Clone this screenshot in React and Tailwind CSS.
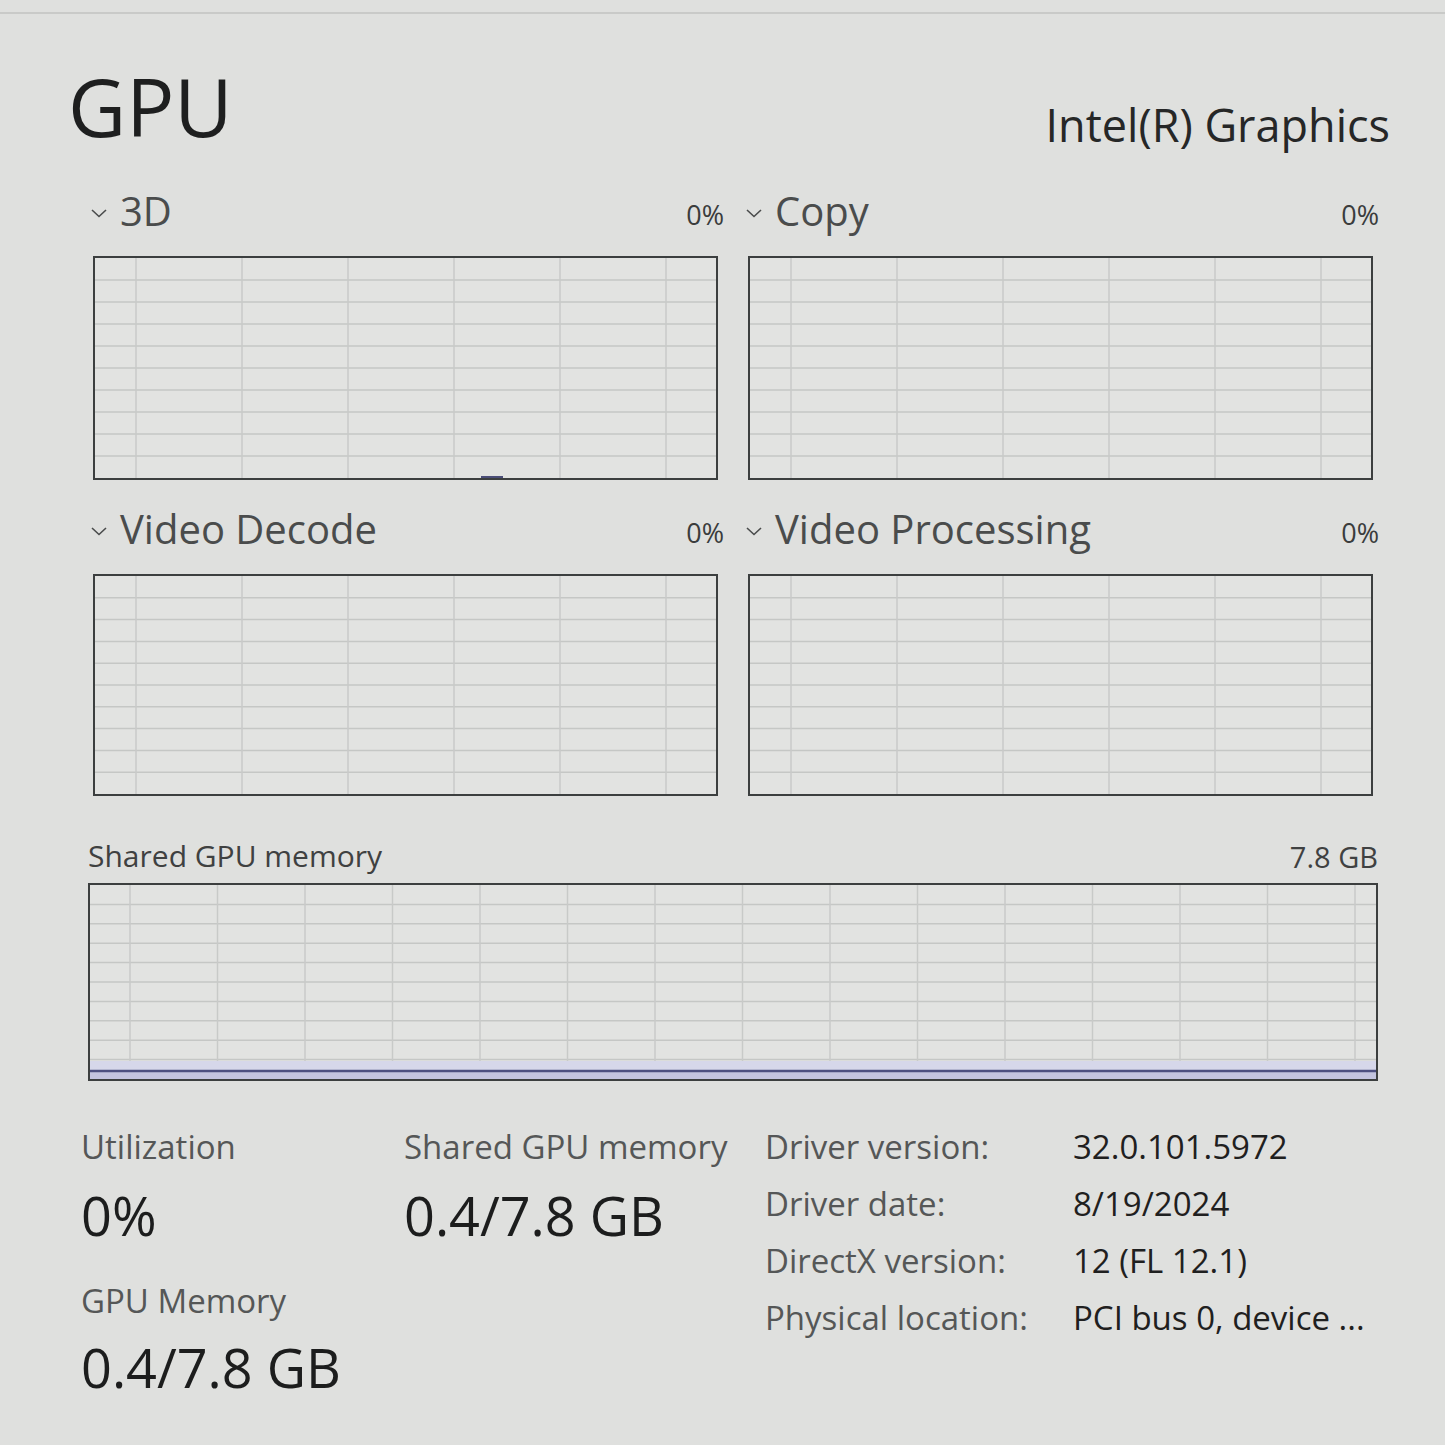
import React from "react";

const engines = [
  [
    { name: "3D", value: "0%", blip: true },
    { name: "Copy", value: "0%" },
  ],
  [
    { name: "Video Decode", value: "0%" },
    { name: "Video Processing", value: "0%" },
  ],
];

const details = [
  ["Driver version:", "32.0.101.5972"],
  ["Driver date:", "8/19/2024"],
  ["DirectX version:", "12 (FL 12.1)"],
  ["Physical location:", "PCI bus 0, device ..."],
];

function Chevron() {
  return (
    <svg width="18" height="10" viewBox="0 0 18 10" className="mt-[2px] mr-[12px] shrink-0">
      <path d="M2 2 L9 8.5 L16 2" fill="none" stroke="#4a4c4c" strokeWidth="1.6" />
    </svg>
  );
}

// grid lines drawn like the task manager graph, 10 rows, scrolling columns
function GridChart({ width, height, offset, spacing, children }) {
  const rows = [];
  for (let i = 1; i < 10; i++) rows.push((height * i) / 10);
  const cols = [];
  for (let x = offset; x < width; x += spacing) cols.push(x);

  return (
    <svg width={width} height={height} className="block">
      {rows.map((y) => (
        <line key={"r" + y} x1="0" x2={width} y1={y} y2={y} stroke="#c5c7c5" strokeWidth="1.5" />
      ))}
      {cols.map((x) => (
        <line key={"c" + x} x1={x} x2={x} y1="0" y2={height} stroke="#c8cac8" strokeWidth="1.5" />
      ))}
      {children}
    </svg>
  );
}

function EngineGraph({ name, value, blip, height }) {
  return (
    <div className="flex flex-col">
      <div className="-ml-[3px] -mr-[6px] mb-[25px] flex h-[38px] items-start justify-between">
        <div className="flex items-center text-[40px] leading-none text-[#4a4c4c]">
          <Chevron />
          <span className="-mt-[2px]">{name}</span>
        </div>
        <span className="mt-[8px] text-[27px] leading-none text-[#3a3c3c]">{value}</span>
      </div>
      <div className="w-[625px] border-2 border-[#3c3f3f] bg-[#e2e3e1]">
        <GridChart width={621} height={height - 4} offset={41} spacing={106}>
          {blip ? (
            <line x1="386" x2="408" y1={height - 5} y2={height - 5} stroke="#4b4e78" strokeWidth="2" />
          ) : null}
        </GridChart>
      </div>
    </div>
  );
}

export default function App() {
  return (
    <div className="h-[1445px] w-[1445px] overflow-hidden bg-[#dfe0de] font-['Open_Sans',sans-serif]">
      <div className="mt-[12px] border-t-2 border-[#c9cac8]" />

      <div className="flex items-start justify-between pl-[68px] pr-[55px] pt-[52px]">
        <h1 className="text-[80px] font-normal leading-none text-[#1e1f1f]">GPU</h1>
        <div className="mt-[36px] text-[45px] leading-none text-[#262727]">Intel(R) Graphics</div>
      </div>

      <div className="mt-[46px] flex flex-col gap-[31px] pl-[93px]">
        {engines.map((row, i) => (
          <div key={i} className="flex gap-[30px]">
            {row.map((e) => (
              <EngineGraph key={e.name} {...e} height={i === 0 ? 224 : 222} />
            ))}
          </div>
        ))}
      </div>

      <div className="mt-[46px] w-[1290px] ml-[88px]">
        <div className="mb-[13px] flex h-[28px] items-start justify-between text-[30px] leading-none text-[#3f4141]">
          <span className="-mt-[1px]">Shared GPU memory</span>
          <span className="text-[29px]">7.8 GB</span>
        </div>
        <div className="border-2 border-[#3c3f3f] bg-[#e2e3e1]">
          <GridChart width={1286} height={194} offset={40} spacing={87.5}>
            <rect x="0" y="176" width="1286" height="10" fill="#d6d7ea" />
            <rect x="0" y="187" width="1286" height="7" fill="#c3c4df" />
            <line x1="0" x2="1286" y1="186" y2="186" stroke="#4c4f80" strokeWidth="2.5" />
          </GridChart>
        </div>
      </div>

      <div className="mt-[38px] flex items-start pl-[81px]">
        <div className="flex w-[323px] flex-col pt-[11px]">
          <span className="text-[33px] leading-none text-[#555757]">Utilization</span>
          <span className="mt-[25px] text-[54px] leading-none text-[#1c1d1d]">0%</span>
          <span className="mt-[42px] text-[33px] leading-none text-[#555757]">GPU Memory</span>
          <span className="mt-[23px] text-[54px] leading-none text-[#1c1d1d]">0.4/7.8 GB</span>
        </div>
        <div className="flex w-[361px] flex-col pt-[11px]">
          <span className="text-[33px] leading-none text-[#555757]">Shared GPU memory</span>
          <span className="mt-[25px] text-[54px] leading-none text-[#1c1d1d]">0.4/7.8 GB</span>
        </div>
        <div className="-mt-[1px] flex flex-col">
          {details.map(([label, val]) => (
            <div key={label} className="flex text-[33px] leading-[57px]">
              <span className="w-[308px] text-[#555757]">{label}</span>
              <span className="text-[#1f2020]">{val}</span>
            </div>
          ))}
        </div>
      </div>
    </div>
  );
}
